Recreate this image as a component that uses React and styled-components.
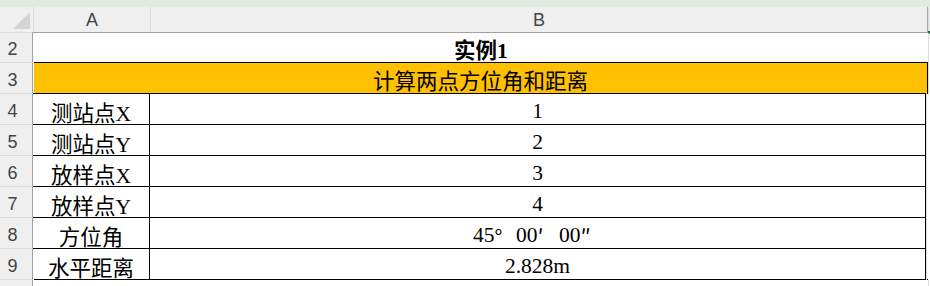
import React from "react";
import styled, { createGlobalStyle } from "styled-components";

const ROWS = [
  { n: 4, label: "测站点X", value: "1" },
  { n: 5, label: "测站点Y", value: "2" },
  { n: 6, label: "放样点X", value: "3" },
  { n: 7, label: "放样点Y", value: "4" },
  { n: 8, label: "方位角", value: "angle" },
  { n: 9, label: "水平距离", value: "2.828m" },
];

export default function App() {
  return (
    <>
      <Global />
      <Sheet>
        <TopStrip />
        <HeaderRow>
          <Corner>
            <Triangle />
          </Corner>
          <ColHead $w={117} $divider>A</ColHead>
          <ColHead $w={777}>B</ColHead>
          <Edge>
            <Mark />
          </Edge>
        </HeaderRow>

        <Row $h={30}>
          <RowNum>2</RowNum>
          <Merged $bold>实例1</Merged>
          <Edge />
        </Row>
        <Row $h={31} $top>
          <RowNum>3</RowNum>
          <Merged $fill="#ffc000">计算两点方位角和距离</Merged>
          <Edge />
        </Row>

        {ROWS.map((r) => (
          <Row key={r.n} $h={31} $top>
            <RowNum>{r.n}</RowNum>
            <Cell $w={117} $divider>{r.label}</Cell>
            <Cell $w={776}>
              {r.value === "angle" ? (
                <>
                  45<Sym>°</Sym>00<Sym>′</Sym>00<Sym>″</Sym>
                </>
              ) : (
                r.value
              )}
            </Cell>
            <Edge />
          </Row>
        ))}

        <Row $h={6} $top>
          <RowNum />
          <Blank />
          <Edge />
        </Row>
      </Sheet>
    </>
  );
}

const Global = createGlobalStyle`
  html, body {
    margin: 0;
    padding: 0;
    background: #ffffff;
    overflow: hidden;
  }
`;

const Sheet = styled.div`
  width: 930px;
  height: 286px;
  display: flex;
  flex-direction: column;
  font-family: "Liberation Serif", "Noto Sans CJK SC", serif;
  color: #000;
`;

const TopStrip = styled.div`
  height: 7px;
  background: #e1ebe4;
`;

const HeaderRow = styled.div`
  display: flex;
  height: 25px;
  background: #efefef;
  border-bottom: 1px solid #a0a0a0;
`;

const Corner = styled.div`
  width: 33px;
  border-right: 1px solid #d8d8d8;
  position: relative;
`;

const Triangle = styled.div`
  position: absolute;
  right: 3px;
  bottom: 3px;
  width: 0;
  height: 0;
  border-left: 17px solid transparent;
  border-bottom: 17px solid #d4d4d4;
`;

const ColHead = styled.div`
  width: ${(p) => p.$w}px;
  box-sizing: border-box;
  border-right: ${(p) => (p.$divider ? "1px solid #d8d8d8" : "1px solid #a8a8a8")};
  display: flex;
  align-items: center;
  justify-content: center;
  padding-top: 2px;
  font-family: "Liberation Sans", "Noto Sans", sans-serif;
  font-size: 18px;
  color: #444;
`;

const Edge = styled.div`
  flex: 1;
  position: relative;
  border-left: 1px solid #dcdcdc;
`;

const Mark = styled.div`
  position: absolute;
  left: -1px;
  bottom: -2px;
  width: 3px;
  height: 3px;
  background: #217346;
`;

const Row = styled.div`
  display: flex;
  height: ${(p) => p.$h}px;
  flex-shrink: 0;
  box-sizing: content-box;
`;

const RowNum = styled.div`
  width: 33px;
  flex-shrink: 0;
  box-sizing: border-box;
  border-right: 1px solid #a0a0a0;
  border-top: 1px solid #dcdcdc;
  margin-top: -1px;
  height: calc(100% + 1px);
  background: #efefef;
  display: flex;
  align-items: center;
  justify-content: center;
  padding-right: 7px;
  padding-top: 3px;
  font-family: "Liberation Sans", "Noto Sans", sans-serif;
  font-size: 18px;
  color: #444;
`;

const Merged = styled.div`
  width: 894px;
  box-sizing: border-box;
  margin-left: 1px;
  background: ${(p) => p.$fill || "#fff"};
  border-top: ${(p) => (p.$fill ? "1px solid #000" : "none")};
  border-right: ${(p) => (p.$fill ? "1px solid #000" : "none")};
  margin-top: ${(p) => (p.$fill ? "-1px" : "0")};
  height: ${(p) => (p.$fill ? "calc(100% + 1px)" : "100%")};
  display: flex;
  align-items: center;
  justify-content: center;
  padding-top: 1px;
  font-size: 21.5px;
  font-weight: ${(p) => (p.$bold ? 700 : 400)};
`;

const Cell = styled.div`
  width: ${(p) => p.$w}px;
  flex-shrink: 0;
  box-sizing: border-box;
  border-top: 1px solid #000;
  border-right: 1px solid #000;
  margin-top: -1px;
  height: calc(100% + 1px);
  display: flex;
  align-items: center;
  justify-content: center;
  padding-top: 4px;
  font-size: 21.5px;
`;

const Blank = styled.div`
  width: 894px;
  margin-left: 1px;
  margin-top: -1px;
  border-top: 1px solid #000;
`;

const Sym = styled.span`
  display: inline-block;
  width: 1em;
  text-align: left;
  font-family: "Noto Sans CJK SC", sans-serif;
`;
